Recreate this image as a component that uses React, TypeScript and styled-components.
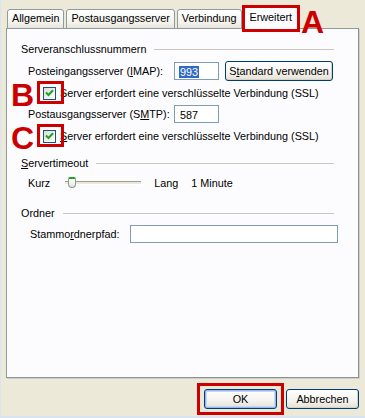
import React from 'react';
import styled, { createGlobalStyle } from 'styled-components';

const GlobalStyle = createGlobalStyle`
  html, body {
    margin: 0;
    padding: 0;
    background: #ece9d8;
  }
  body {
    font-family: Tahoma, 'Liberation Sans', Arial, sans-serif;
    font-size: 10.8px;
    color: #000;
  }
`;

const Window = styled.div`
  width: 365px;
  height: 418px;
  box-sizing: border-box;
  background: #ece9d8;
  border-left: 1px solid #d9e4f2;
  border-bottom: 2px solid #d9e4f2;
  padding: 5px 6px 0 5px;
  display: flex;
  flex-direction: column;
`;

const TabStrip = styled.div`
  display: flex;
  align-items: flex-end;
  height: 24px;
  padding-left: 1px;
  position: relative;
  z-index: 2;
`;

const Tab = styled.div<{ $active?: boolean }>`
  position: relative;
  box-sizing: border-box;
  height: ${p => (p.$active ? '24px' : '20px')};
  margin: ${p => (p.$active ? '0 -1px -1px 0' : '0 2px 0 0')};
  padding: ${p => (p.$active ? '3px 5px 0' : '2px 4px 0')};
  border: 1px solid #919b9c;
  border-bottom: ${p => (p.$active ? 'none' : '1px solid #919b9c')};
  border-radius: 3px 3px 0 0;
  background: ${p => (p.$active ? '#fcfcfe' : 'linear-gradient(#ffffff, #f3f2ec 70%, #e6e4dc)')};
  white-space: nowrap;
  ${p => p.$active && 'border-top: 2px solid #ffc83c;'}
`;

const Mark = styled.div<{ $inset: string }>`
  position: absolute;
  inset: ${p => p.$inset};
  border: 3px solid #cc0000;
  pointer-events: none;
`;

const Letter = styled.span<{ $left: string; $top: string }>`
  position: absolute;
  left: ${p => p.$left};
  top: ${p => p.$top};
  font-family: 'Liberation Sans', Arial, sans-serif;
  font-weight: 700;
  font-size: 32px;
  line-height: 1;
  color: #cc0000;
`;

const Panel = styled.div`
  position: relative;
  z-index: 1;
  box-sizing: border-box;
  height: 350px;
  margin-top: -1px;
  background: #fcfcfe;
  border: 1px solid #919b9c;
  border-right-color: #8a9293;
  border-bottom-color: #8a9293;
  box-shadow: 1px 1px 0 #d0cfc6;
  padding: 12px 20px 0 14px;
`;

const GroupTitle = styled.div<{ $gap?: number }>`
  display: flex;
  align-items: center;
  height: 16px;
  margin-top: ${p => p.$gap ?? 0}px;
`;

const TitleLine = styled.div`
  flex: 1;
  height: 1px;
  background: #c8c8c0;
  margin: 1px 4px 0 8px;
`;

const Row = styled.div<{ $h?: number; $indent?: number; $gap?: number }>`
  position: relative;
  display: flex;
  align-items: center;
  height: ${p => p.$h ?? 20}px;
  margin-top: ${p => p.$gap ?? 0}px;
  padding-left: ${p => p.$indent ?? 7}px;
`;

const Label = styled.span<{ $w?: number }>`
  display: inline-block;
  width: ${p => (p.$w ? `${p.$w}px` : 'auto')};
  white-space: nowrap;
`;

const U = styled.span`
  text-decoration: underline;
`;

const TextBox = styled.div<{ $w: number }>`
  box-sizing: border-box;
  width: ${p => p.$w}px;
  height: 18px;
  border: 1px solid #7f9db9;
  background: #fff;
  padding: 1px 4px 0 5px;
  display: flex;
  align-items: center;
`;

const Selected = styled.span`
  background: #316ac5;
  color: #fff;
  padding: 0 1px;
  margin-left: -1px;
`;

const XpButton = styled.div<{ $w: number; $focus?: boolean }>`
  box-sizing: border-box;
  width: ${p => p.$w}px;
  height: 20px;
  border: 1px solid #003c74;
  border-radius: 3px;
  background: linear-gradient(#ffffff, #f4f3ee 60%, #e3e0d3);
  box-shadow: ${p => (p.$focus ? 'inset 0 0 0 1px #98b8ea, inset 0 0 0 2px #c4d8f5' : 'inset -1px -1px 0 #d6d0c5')};
  display: flex;
  align-items: center;
  justify-content: center;
  white-space: nowrap;
`;

const CheckBox = styled.div`
  position: relative;
  box-sizing: border-box;
  width: 13px;
  height: 13px;
  border: 1px solid #1c5180;
  background: linear-gradient(135deg, #dcdcd7, #ffffff);
  display: flex;
  align-items: center;
  justify-content: center;
  margin-right: 4px;
  flex-shrink: 0;
`;

const Slider = styled.div`
  position: relative;
  width: 76px;
  height: 14px;
  margin: 0 13px 0 15px;
  display: flex;
  align-items: center;
`;

const Track = styled.div`
  width: 100%;
  height: 2px;
  background: #ece9d8;
  border-top: 1px solid #9d9c99;
  border-bottom: 1px solid #fff;
`;

const Thumb = styled.div`
  position: absolute;
  left: 3px;
  top: 1px;
  width: 8px;
  height: 11px;
  box-sizing: border-box;
  border: 1px solid #8a9a8c;
  border-top: 2px solid #21a121;
  border-radius: 2px 2px 4px 4px;
  background: linear-gradient(#ffffff, #e5e5de);
`;

const Footer = styled.div`
  display: flex;
  justify-content: flex-end;
  gap: 9px;
  padding-top: 11px;
`;

const MarkWrap = styled.div`
  position: relative;
`;

const Check = () => (
  <svg width="9" height="8" viewBox="0 0 9 8">
    <path d="M1 3.5 L3.5 6 L8 1.2" fill="none" stroke="#21a121" strokeWidth="2" />
  </svg>
);

const SslRow: React.FC<{ letter: string; underlineFirst?: boolean }> = ({ letter, underlineFirst }) => (
  <Row $indent={22} $gap={2}>
    <Letter $left="-10px" $top="-4px">{letter}</Letter>
    <MarkWrap>
      <CheckBox>
        <Check />
      </CheckBox>
      <Mark $inset="-6px -4px -4px -6px" />
    </MarkWrap>
    <Label>
      {underlineFirst ? (
        <>
          <U>S</U>erver erfordert eine verschlüsselte Verbindung (SSL)
        </>
      ) : (
        <>
          Server er<U>f</U>ordert eine verschlüsselte Verbindung (SSL)
        </>
      )}
    </Label>
  </Row>
);

export default function App() {
  return (
    <>
      <GlobalStyle />
      <Window>
        <TabStrip>
          <Tab>Allgemein</Tab>
          <Tab>Postausgangsserver</Tab>
          <Tab>Verbindung</Tab>
          <Tab $active>
            Erweitert
            <Mark $inset="-3px -3px -2px -3px" />
            <Letter $left="calc(100% + 4px)" $top="-2px">A</Letter>
          </Tab>
        </TabStrip>
        <Panel>
          <GroupTitle>
            <Label>Serveranschlussnummern</Label>
            <TitleLine />
          </GroupTitle>
          <Row $gap={4}>
            <Label $w={146}>
              Posteingangsserver (<U>I</U>MAP):
            </Label>
            <TextBox $w={45}>
              <Selected>993</Selected>
            </TextBox>
            <XpButton $w={108} style={{ marginLeft: 6 }}>
              S<U>t</U>andard verwenden
            </XpButton>
          </Row>
          <SslRow letter="B" />
          <Row $gap={1}>
            <Label $w={146}>
              Postausgangsserver (S<U>M</U>TP):
            </Label>
            <TextBox $w={45}>587</TextBox>
          </Row>
          <SslRow letter="C" underlineFirst />
          <GroupTitle $gap={9}>
            <Label>
              <U>S</U>ervertimeout
            </Label>
            <TitleLine />
          </GroupTitle>
          <Row $gap={2}>
            <Label>Kurz</Label>
            <Slider>
              <Track />
              <Thumb />
            </Slider>
            <Label>Lang</Label>
            <Label style={{ marginLeft: 13 }}>1 Minute</Label>
          </Row>
          <GroupTitle $gap={12}>
            <Label>Ordner</Label>
            <TitleLine />
          </GroupTitle>
          <Row $gap={2} $h={22} $indent={9}>
            <Label $w={100}>
              Stammo<U>r</U>dnerpfad:
            </Label>
            <TextBox $w={208} />
          </Row>
        </Panel>
        <Footer>
          <MarkWrap>
            <XpButton $w={73} $focus>OK</XpButton>
            <Mark $inset="-6px -7px -6px -7px" />
          </MarkWrap>
          <XpButton $w={73}>Abbrechen</XpButton>
        </Footer>
      </Window>
    </>
  );
}
